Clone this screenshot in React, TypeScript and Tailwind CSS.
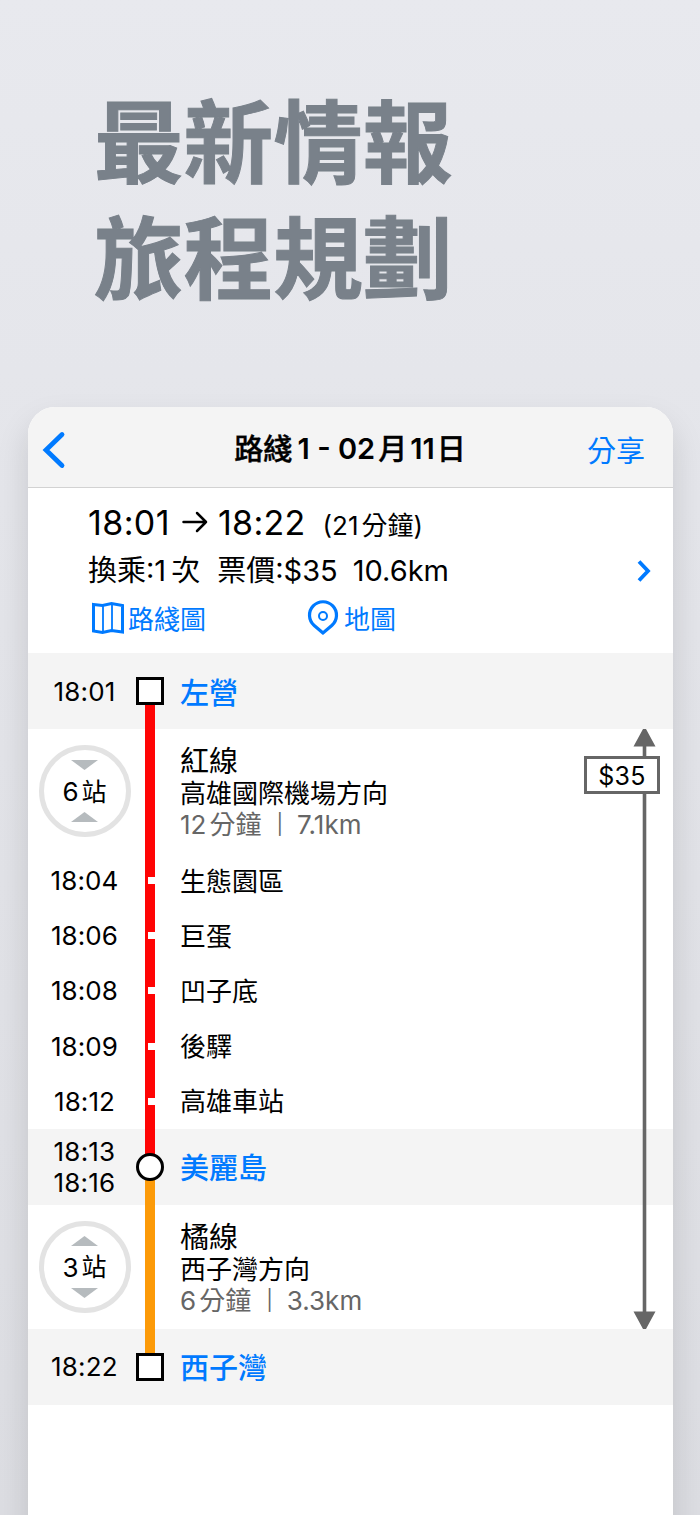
import React from "react";

type Stop = { time: string; name: string };

const STOPS: Stop[] = [
  { time: "18:04", name: "生態園區" },
  { time: "18:06", name: "巨蛋" },
  { time: "18:08", name: "凹子底" },
  { time: "18:09", name: "後驛" },
  { time: "18:12", name: "高雄車站" },
];

function Rail({ top, bottom, children }: { top?: string; bottom?: string; children?: React.ReactNode }) {
  return (
    <div className="relative flex w-7 shrink-0 items-center justify-center self-stretch">
      <div className="flex w-[10.5px] flex-col self-stretch">
        <div className={`flex-1 ${top ?? ""}`} />
        <div className={`flex-1 ${bottom ?? ""}`} />
      </div>
      {children}
    </div>
  );
}

function StationRow({
  times,
  name,
  top,
  bottom,
  round,
}: {
  times: string[];
  name: string;
  top?: string;
  bottom?: string;
  round?: boolean;
}) {
  return (
    <div className="flex h-[76px] items-center bg-[#f4f4f4]">
      <div className="w-[108px] pl-[5px] text-center text-[26px] leading-[31px] tracking-[0.2px]">
        {times.map((t) => (
          <div key={t}>{t}</div>
        ))}
      </div>
      <Rail top={top} bottom={bottom}>
        <div
          className={`absolute top-6 left-0 size-7 border-[3px] border-black bg-white ${round ? "rounded-full" : ""}`}
        />
      </Rail>
      <div className="pt-[5px] pl-4 text-[29px] font-medium leading-[40px] text-[#007aff]">{name}</div>
    </div>
  );
}

function LegRow({
  count,
  line,
  direction,
  minutes,
  distance,
  color,
  expanded,
}: {
  count: string;
  line: string;
  direction: string;
  minutes: string;
  distance: string;
  color: string;
  expanded?: boolean;
}) {
  return (
    <div className="flex h-[124px]">
      <div className="w-[108px] pt-4 pl-[10.5px]">
        <div className="flex size-[92px] flex-col items-center justify-center rounded-full border-[5px] border-[#e3e3e3]">
          <svg width="27" height="10" viewBox="0 0 27 10" className="fill-[#b6bbbe]">
            <path d={expanded ? "M0 0H27L13.5 10Z" : "M0 10H27L13.5 0Z"} />
          </svg>
          <div className="flex h-[42px] items-center gap-[3px] pt-px text-[25px] leading-[41px]">
            <span className="text-[26px]">{count}</span>
            <span className="pt-px">站</span>
          </div>
          <svg width="27" height="10" viewBox="0 0 27 10" className="fill-[#b6bbbe]">
            <path d={expanded ? "M0 10H27L13.5 0Z" : "M0 0H27L13.5 10Z"} />
          </svg>
        </div>
      </div>
      <Rail top={color} bottom={color} />
      <div className="pt-[15px] pl-4">
        <div className="text-[29px] leading-[35px]">{line}</div>
        <div className="text-[26px] leading-[30px]">{direction}</div>
        <div className="flex items-center text-[26px] leading-[31px] text-[#666]">
          <span>{minutes}</span>
          <span className="pl-[3px]">分鐘</span>
          <span className="mr-[14px] ml-[15px] text-[20px]">|</span>
          <span>{distance}</span>
        </div>
      </div>
    </div>
  );
}

function StopRow({ time, name }: Stop) {
  return (
    <div className="flex h-[55.2px] items-center">
      <div className="w-[108px] pl-[5px] text-center text-[26px] leading-[31px] tracking-[0.1px]">{time}</div>
      <Rail top="bg-[#ff0404]" bottom="bg-[#ff0404]">
        <div className="absolute right-0 h-[7px] w-[7.5px] bg-white mr-[8.5px]" />
      </Rail>
      <div className="pt-[2px] pl-4 text-[26px] leading-[36px]">{name}</div>
    </div>
  );
}

function FareBracket() {
  return (
    <div className="absolute top-[76px] right-[13px] flex h-[600px] w-[76px] flex-col">
      <svg width="76" height="600" viewBox="0 0 76 600" className="absolute inset-0">
        <path d="M60.5 4V596" stroke="#666" strokeWidth="3.6" />
        <path d="M49.5 17.5 59 0h3l9.500 17.500ZM49.500 582.500 59 600h3l9.500-17.500Z" fill="#666" />
      </svg>
      <div className="relative mt-[27px] flex h-[38px] items-center justify-center border-[3px] border-[#666] bg-white pt-[3px] text-[25px] tracking-[0.2px]">
        $35
      </div>
    </div>
  );
}

export default function App() {
  return (
    <main className="h-[1515px] w-[700px] overflow-hidden bg-linear-to-b from-[#e8e9ee] to-[#dcdde2] px-7 font-['Inter','Noto_Sans_CJK_TC',sans-serif] text-black">
      <h1 className="h-[407px] pt-[86px] pl-[66px] text-[89.600px] font-bold leading-[116px] text-[#79818a] [-webkit-text-stroke:1px_#79818a]">
        最新情報
        <br />
        旅程規劃
      </h1>
      <section className="h-[1140px] w-[645px] overflow-hidden rounded-t-[27px] bg-white shadow-[0_16px_32px_rgba(0,0,0,0.13)]">
        <header className="flex h-[81px] items-center border-b border-[#d2d2d2] bg-[#f4f4f4] pt-[5px] pr-7 pl-[14px]">
          <svg width="24" height="38" viewBox="0 0 24 38" fill="none" className="shrink-0">
            <path d="M20 3.500 4 19 20 34.500" stroke="#007aff" strokeWidth="4.800" strokeLinecap="round" strokeLinejoin="miter" />
          </svg>
          <div className="flex flex-1 justify-center whitespace-pre pl-[47px] text-[29px] font-semibold">
            <span className="pt-px font-medium [-webkit-text-stroke:0.400px_black]">路綫</span>
            <span className="-ml-[2px]"> 1 - 02</span>
            <span className="px-[3px] pt-px font-medium [-webkit-text-stroke:0.400px_black]">月</span>
            <span>11</span>
            <span className="pt-px pl-[2px] font-medium [-webkit-text-stroke:0.400px_black]">日</span>
          </div>
          <button className="pt-[5px] text-[29px] text-[#007aff]">分享</button>
        </header>

        <div className="flex h-[165px] items-center">
          <div className="h-full flex-1 pt-[10px] pl-[60px]">
            <div className="flex h-[48px] items-center">
              <span className="text-[34px] tracking-[0.4px]">18:01</span>
              <svg width="26" height="22" viewBox="0 0 26 22" fill="none" className="mr-[10px] ml-[12px]">
                <path d="M1.500 11H24M15 2l9 9-9 9" stroke="#000" strokeWidth="2.500" strokeLinecap="round" strokeLinejoin="round" />
              </svg>
              <span className="text-[34px] tracking-[0.3px]">18:22</span>
              <span className="pt-[7px] pl-[17px] text-[26px]">
                (21<span className="pl-[3px]">分鐘</span>)
              </span>
            </div>
            <div className="flex h-[49px] items-center whitespace-pre pt-px text-[29px]">
              <span>換乘:1</span>
              <span className="pl-[5px]">次</span>
              <span className="pl-[17px]">票價:$35</span>
              <span className="pl-[15px]">10.6km</span>
            </div>
            <div className="flex h-[46px] items-center text-[26px] text-[#007aff]">
              <svg width="34" height="34" viewBox="0 0 34 34" fill="none" className="ml-[3px]" stroke="#007aff">
                <path d="M2.500 3.500 11.500 4.500 20.500 2.500 31.500 4.500V31L20.500 29.500 11.500 31.500 2.500 30Z" strokeWidth="3" />
                <path d="M12 4V31M21 3V30" strokeWidth="1.800" />
              </svg>
              <span className="w-[182px] pt-[3px] pl-[3px]">路綫圖</span>
              <svg width="32" height="36" viewBox="0 0 32 36" fill="none" stroke="#007aff">
                <path d="M16 33 7.200 25.500A13.500 13.500 0 1 1 24.800 25.500Z" strokeWidth="3.200" />
                <circle cx="16" cy="16" r="4" strokeWidth="2" />
              </svg>
              <span className="pt-[3px] pl-[5px]">地圖</span>
            </div>
          </div>
          <svg width="14" height="22" viewBox="0 0 14 22" fill="none" className="mr-[22px]">
            <path d="M2 1.500 11 11 2 20.500" stroke="#007aff" strokeWidth="3.800" />
          </svg>
        </div>

        <div className="relative">
          <StationRow times={["18:01"]} name="左營" bottom="bg-[#ff0404]" />
          <LegRow count="6" line="紅線" direction="高雄國際機場方向" minutes="12" distance="7.1km" color="bg-[#ff0404]" expanded />
          {STOPS.map((stop) => (
            <StopRow key={stop.time} {...stop} />
          ))}
          <StationRow times={["18:13", "18:16"]} name="美麗島" top="bg-[#ff0404]" bottom="bg-[#fc9a08]" round />
          <LegRow count="3" line="橘線" direction="西子灣方向" minutes="6" distance="3.3km" color="bg-[#fc9a08]" />
          <StationRow times={["18:22"]} name="西子灣" top="bg-[#fc9a08]" />
          <FareBracket />
        </div>
      </section>
    </main>
  );
}
